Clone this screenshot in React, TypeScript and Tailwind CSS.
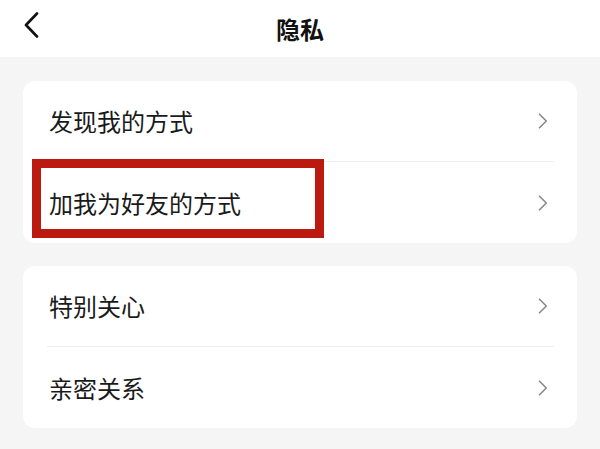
import React from 'react';

const font = { fontFamily: '"Noto Sans CJK SC", "Noto Sans", sans-serif' };

function Chevron() {
  return (
    <svg width="10" height="16" viewBox="0 0 10 16" fill="none" className="shrink-0">
      <path d="M1.5 1.2 L8.3 8 L1.5 14.8" stroke="#8a8a8a" strokeWidth="1.6" strokeLinecap="round" strokeLinejoin="round" />
    </svg>
  );
}

function Row({ label, tall }: { label: string; tall?: boolean }) {
  return (
    <div className={`flex items-center justify-between pl-[26px] pr-[29px] ${tall ? 'h-[81px]' : 'h-[80px]'}`}>
      <span className="text-[24px] leading-none text-[#1a1a1a]">{label}</span>
      <Chevron />
    </div>
  );
}

function Card({ items }: { items: string[] }) {
  return (
    <div className="mx-[23px] bg-white rounded-[12px]">
      <Row label={items[0]} />
      <div className="ml-[24px] mr-[23px] h-px bg-[#eeeeee]" />
      <Row label={items[1]} tall />
    </div>
  );
}

export default function App() {
  return (
    <div className="relative w-[600px] h-[449px] overflow-hidden bg-[#f5f5f5]" style={font}>
      <div className="relative h-[57px] bg-white flex items-center justify-center">
        <svg width="16" height="26" viewBox="0 0 16 26" fill="none" className="absolute left-[24px] top-[12px]">
          <path d="M13 1.5 L2 13 L13 24.5" stroke="#111111" strokeWidth="2.6" strokeLinecap="round" strokeLinejoin="round" />
        </svg>
        <span className="text-[24px] leading-none font-bold text-[#111111]">隐私</span>
      </div>

      <div className="flex flex-col gap-[23px] pt-[24px]">
        <Card items={['发现我的方式', '加我为好友的方式']} />
        <Card items={['特别关心', '亲密关系']} />
      </div>

      <div className="absolute left-[32px] top-[159px] w-[292px] h-[79px] border-[9px] border-[#bb1a10]" />
    </div>
  );
}
